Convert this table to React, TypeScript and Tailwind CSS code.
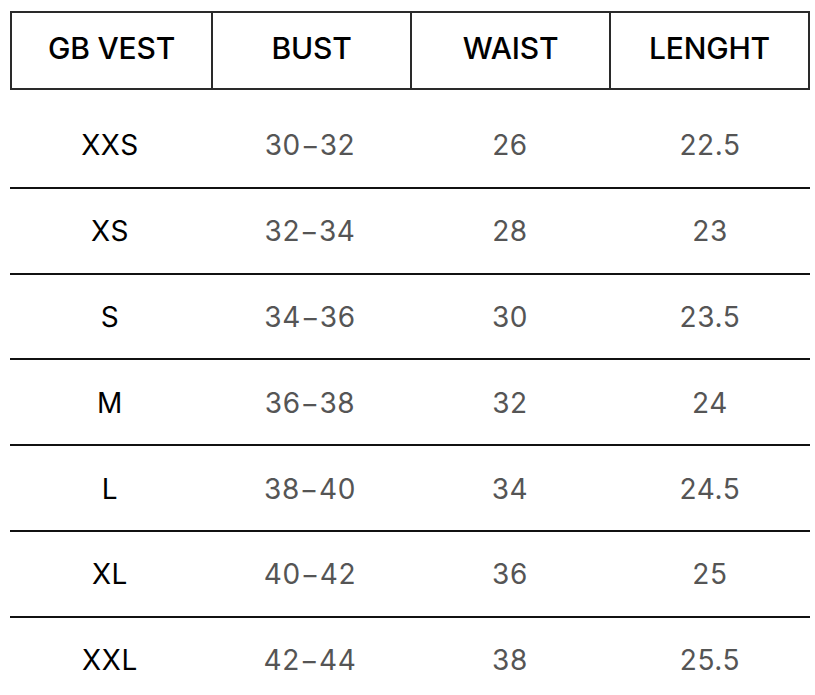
const rows = [
  ["XXS", "30-32", "26", "22.5"],
  ["XS", "32-34", "28", "23"],
  ["S", "34-36", "30", "23.5"],
  ["M", "36-38", "32", "24"],
  ["L", "38-40", "34", "24.5"],
  ["XL", "40-42", "36", "25"],
  ["XXL", "42-44", "38", "25.5"],
];

const headers = ["GB VEST", "BUST", "WAIST", "LENGHT"];

export default function App() {
  return (
    <div
      className="min-h-screen bg-white pl-[10px] pt-[11px]"
      style={{ fontFamily: "Inter, 'Noto Sans', sans-serif" }}
    >
      <div className="w-[800px]">
        {/* header */}
        <div className="grid h-[79px] grid-cols-4 border-2 border-[#2a2a2a]">
          {headers.map((h, i) => (
            <div
              key={h}
              className={
                "flex items-center justify-center pb-[4px] text-[30px] font-medium tracking-[-0.2px] text-black " +
                (i > 0 ? "border-l-2 border-[#2a2a2a]" : "")
              }
            >
              {h}
            </div>
          ))}
        </div>

        {/* rows */}
        <div className="mt-[13px]">
          {rows.map((r) => (
            <div
              key={r[0]}
              className="grid h-[85.8px] grid-cols-4 border-b-2 border-[#111]"
            >
              {r.map((c, j) => (
                <div
                  key={j}
                  className={
                    "flex items-center justify-center pt-[1px] text-[28px] tracking-[0.6px] " +
                    (j === 0 ? "text-black" : "text-[#555]")
                  }
                >
                  {c.replace("-", "\u2212")}
                </div>
              ))}
            </div>
          ))}
        </div>
      </div>
    </div>
  );
}
